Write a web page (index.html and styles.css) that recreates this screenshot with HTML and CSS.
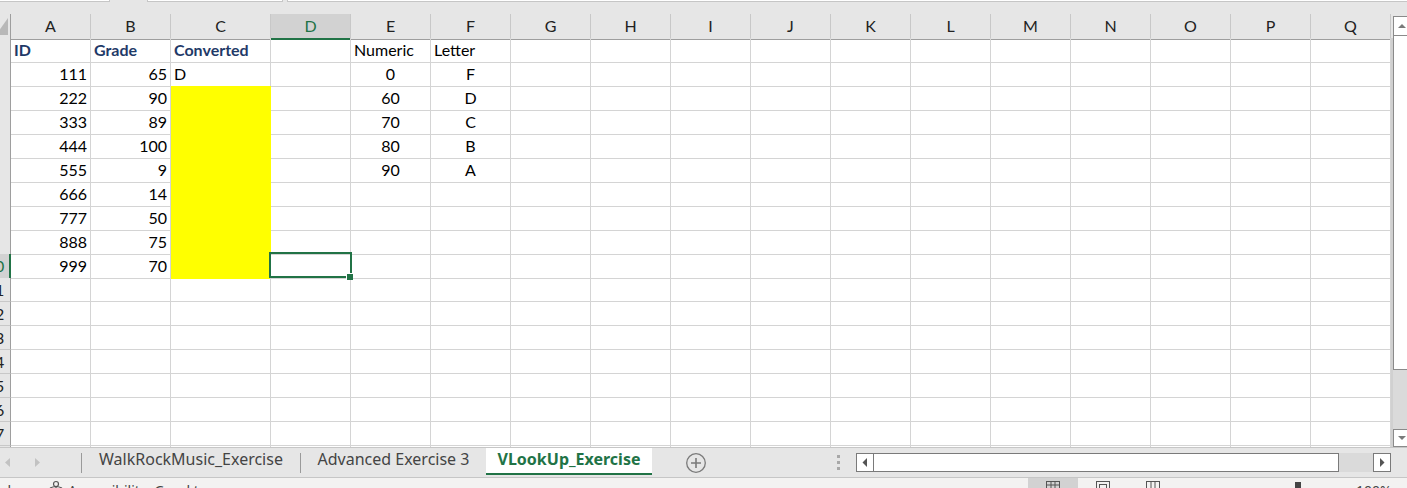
FILE: index.html
```html
<!DOCTYPE html>
<html>
<head>
<meta charset="utf-8">
<link rel="stylesheet" href="styles.css">
</head>
<body>
<div class="top">
  <div class="fb fb1"></div>
  <div class="fb fb2"></div>
  <div class="fb fb3"></div>
</div>
<div class="main">
  <div class="sheet">
    <div class="hdr">
      <div class="corner"><svg width="10" height="23" viewBox="0 0 10 23"><polygon points="8,4 8,21 -4,21" fill="#b8b8b8"/></svg></div>
      <div>A</div><div>B</div><div>C</div><div class="sel">D</div><div>E</div><div>F</div><div>G</div><div>H</div><div>I</div><div>J</div><div>K</div><div>L</div><div>M</div><div>N</div><div>O</div><div>P</div><div>Q</div>
    </div>
    <div class="row"><div class="rh"><span>1</span></div><div class="h">ID</div><div class="h">Grade</div><div class="h">Converted</div><div></div><div>Numeric</div><div>Letter</div><div></div><div></div><div></div><div></div><div></div><div></div><div></div><div></div><div></div><div></div><div></div></div>
    <div class="row"><div class="rh"><span>2</span></div><div class="r">111</div><div class="r">65</div><div>D</div><div></div><div class="m">0</div><div class="m">F</div><div></div><div></div><div></div><div></div><div></div><div></div><div></div><div></div><div></div><div></div><div></div></div>
    <div class="row"><div class="rh"><span>3</span></div><div class="r">222</div><div class="r">90</div><div class="y"></div><div></div><div class="m">60</div><div class="m">D</div><div></div><div></div><div></div><div></div><div></div><div></div><div></div><div></div><div></div><div></div><div></div></div>
    <div class="row"><div class="rh"><span>4</span></div><div class="r">333</div><div class="r">89</div><div class="y"></div><div></div><div class="m">70</div><div class="m">C</div><div></div><div></div><div></div><div></div><div></div><div></div><div></div><div></div><div></div><div></div><div></div></div>
    <div class="row"><div class="rh"><span>5</span></div><div class="r">444</div><div class="r">100</div><div class="y"></div><div></div><div class="m">80</div><div class="m">B</div><div></div><div></div><div></div><div></div><div></div><div></div><div></div><div></div><div></div><div></div><div></div></div>
    <div class="row"><div class="rh"><span>6</span></div><div class="r">555</div><div class="r">9</div><div class="y"></div><div></div><div class="m">90</div><div class="m">A</div><div></div><div></div><div></div><div></div><div></div><div></div><div></div><div></div><div></div><div></div><div></div></div>
    <div class="row"><div class="rh"><span>7</span></div><div class="r">666</div><div class="r">14</div><div class="y"></div><div></div><div></div><div></div><div></div><div></div><div></div><div></div><div></div><div></div><div></div><div></div><div></div><div></div><div></div></div>
    <div class="row"><div class="rh"><span>8</span></div><div class="r">777</div><div class="r">50</div><div class="y"></div><div></div><div></div><div></div><div></div><div></div><div></div><div></div><div></div><div></div><div></div><div></div><div></div><div></div><div></div></div>
    <div class="row"><div class="rh"><span>9</span></div><div class="r">888</div><div class="r">75</div><div class="y"></div><div></div><div></div><div></div><div></div><div></div><div></div><div></div><div></div><div></div><div></div><div></div><div></div><div></div><div></div></div>
    <div class="row"><div class="rh rsel"><span>10</span></div><div class="r">999</div><div class="r">70</div><div class="y"></div><div></div><div></div><div></div><div></div><div></div><div></div><div></div><div></div><div></div><div></div><div></div><div></div><div></div><div></div></div>
    <div class="row"><div class="rh"><span>11</span></div><div></div><div></div><div></div><div></div><div></div><div></div><div></div><div></div><div></div><div></div><div></div><div></div><div></div><div></div><div></div><div></div><div></div></div>
    <div class="row"><div class="rh"><span>12</span></div><div></div><div></div><div></div><div></div><div></div><div></div><div></div><div></div><div></div><div></div><div></div><div></div><div></div><div></div><div></div><div></div><div></div></div>
    <div class="row"><div class="rh"><span>13</span></div><div></div><div></div><div></div><div></div><div></div><div></div><div></div><div></div><div></div><div></div><div></div><div></div><div></div><div></div><div></div><div></div><div></div></div>
    <div class="row"><div class="rh"><span>14</span></div><div></div><div></div><div></div><div></div><div></div><div></div><div></div><div></div><div></div><div></div><div></div><div></div><div></div><div></div><div></div><div></div><div></div></div>
    <div class="row"><div class="rh"><span>15</span></div><div></div><div></div><div></div><div></div><div></div><div></div><div></div><div></div><div></div><div></div><div></div><div></div><div></div><div></div><div></div><div></div><div></div></div>
    <div class="row"><div class="rh"><span>16</span></div><div></div><div></div><div></div><div></div><div></div><div></div><div></div><div></div><div></div><div></div><div></div><div></div><div></div><div></div><div></div><div></div><div></div></div>
    <div class="row"><div class="rh"><span>17</span></div><div></div><div></div><div></div><div></div><div></div><div></div><div></div><div></div><div></div><div></div><div></div><div></div><div></div><div></div><div></div><div></div><div></div></div>
    <div class="row"><div class="rh"><span>18</span></div><div></div><div></div><div></div><div></div><div></div><div></div><div></div><div></div><div></div><div></div><div></div><div></div><div></div><div></div><div></div><div></div><div></div></div>
    <div class="selbox"></div>
    <div class="handle"></div>
  </div>
  <div class="vscroll">
    <div class="vbtn vup"><svg width="14" height="18" viewBox="0 0 14 18"><polygon points="4,11 12,11 8,7" fill="#7a7a7a"/></svg></div>
    <div class="vthumb"></div>
    <div class="vtrack"></div>
    <div class="vbtn vdown"><svg width="14" height="16" viewBox="0 0 14 16"><polygon points="4,6 12,6 8,10" fill="#7a7a7a"/></svg></div>
  </div>
</div>
<div class="tabbar">
  <div class="navs">
    <svg width="81" height="29" viewBox="0 0 81 29"><polygon points="10,10 10,19 5,14.5" fill="#c2c2c2"/><polygon points="35,10 35,19 40,14.5" fill="#c2c2c2"/></svg>
  </div>
  <div class="tsep"></div>
  <div class="tab t1">WalkRockMusic_Exercise</div>
  <div class="tsep"></div>
  <div class="tab t2">Advanced Exercise 3</div>
  <div class="tab active">VLookUp_Exercise</div>
  <div class="plus"><svg width="22" height="22" viewBox="0 0 22 22"><circle cx="11" cy="11" r="9.3" fill="none" stroke="#7a7a7a" stroke-width="1.3"/><path d="M11 6v10M6 11h10" stroke="#7a7a7a" stroke-width="1.6"/></svg></div>
  <div class="dots"><i></i><i></i><i></i></div>
  <div class="hscroll">
    <div class="hbtn"><svg width="17" height="17" viewBox="0 0 17 17"><polygon points="10,4 10,13 5.5,8.5" fill="#555"/></svg></div>
    <div class="hthumb"></div>
    <div class="htrack"></div>
    <div class="hbtn hright"><svg width="16" height="17" viewBox="0 0 16 17"><polygon points="6,4 6,13 10.5,8.5" fill="#555"/></svg></div>
  </div>
</div>
<div class="status">
  <div class="st st1">Ready</div>
  <div class="acc"><svg width="16" height="14" viewBox="0 0 16 14"><circle cx="8" cy="5" r="2.5" fill="none" stroke="#555" stroke-width="1.2"/><path d="M2 9 Q8 6 14 9 M8 8v6" fill="none" stroke="#555" stroke-width="1.2"/></svg></div>
  <div class="st st2">Accessibility: Good to go</div>
  <div class="views">
    <div class="vw vsel"><svg width="18" height="11" viewBox="0 0 18 11"><rect x="2.5" y="3.5" width="13" height="9" fill="none" stroke="#555"/><path d="M7 3v9M11 3v9M2 7h14" stroke="#555"/></svg></div>
    <div class="vw"><svg width="18" height="11" viewBox="0 0 18 11"><rect x="2.5" y="3.5" width="13" height="9" fill="none" stroke="#555"/><rect x="5.5" y="6.5" width="7" height="6" fill="none" stroke="#555"/></svg></div>
    <div class="vw"><svg width="18" height="11" viewBox="0 0 18 11"><rect x="2.5" y="3.5" width="13" height="9" fill="none" stroke="#555"/><path d="M7 3v9M11 3v9" stroke="#555"/></svg></div>
  </div>
  <div class="zoomer"><i class="knob"></i></div>
  <div class="st st3">100%</div>
</div>
</body>
</html>
```
FILE: styles.css
```css
* { box-sizing: border-box; }
html, body { margin: 0; padding: 0; }
body {
  width: 1407px;
  height: 488px;
  overflow: hidden;
  background: #e6e6e6;
  font-family: Lato, "Liberation Sans", sans-serif;
}

.top {
  height: 14px;
  display: flex;
  align-items: flex-start;
  background: #e6e6e6;
}
.fb {
  height: 2px;
  background: #fff;
  border-bottom: 1px solid #c6c6c6;
}
.fb1 { width: 110px; border-right: 1px solid #c6c6c6; }
.fb2 { width: 136px; margin-left: 37px; border-left: 1px solid #c6c6c6; border-right: 1px solid #c6c6c6; }
.fb3 { flex: 1; margin-left: 4px; border-left: 1px solid #c6c6c6; }

.main {
  display: flex;
  height: 433px;
  overflow: hidden;
}
.sheet {
  width: 1391px;
  position: relative;
  background: #fff;
  overflow: hidden;
}
.hdr, .row {
  display: grid;
  grid-template-columns: 11px 80px 80px 100px repeat(14, 80px);
  height: 24px;
}
.hdr > div {
  background: #e6e6e6;
  border-right: 1px solid #c8c8c8;
  border-bottom: 1px solid #9e9e9e;
  text-align: center;
  font-size: 16px;
  line-height: 24px;
  color: #222;
}
.hdr > .corner {
  border-right: 1px solid #9e9e9e;
  overflow: hidden;
}
.corner svg { display: block; }
.hdr > .sel {
  background: #d2d2d2;
  color: #217346;
  border-bottom: 2px solid #217346;
}
.row > div {
  border-right: 1px solid #d4d4d4;
  border-bottom: 1px solid #d4d4d4;
  font-size: 16px;
  line-height: 24px;
  padding: 0 3px;
  white-space: nowrap;
  color: #000;
}
.row > .rh {
  background: #e6e6e6;
  border-right: 1px solid #9e9e9e;
  border-bottom: 1px solid #c8c8c8;
  padding: 0;
  overflow: hidden;
  color: #222;
}
.rh span {
  display: block;
  width: 26px;
  margin-left: -18px;
  text-align: center;
}
.row > .rsel {
  background: #d2d2d2;
  border-right: 2px solid #217346;
  color: #217346;
}
.row > .h { font-weight: 700; color: #1f3a68; }
.row > .r { text-align: right; }
.row > .m { text-align: center; }
.row > .y {
  background: #ffff00;
  border-right-color: #ffff00;
  border-bottom-color: #ffff00;
}

.selbox {
  position: absolute;
  left: 269px;
  top: 238px;
  width: 83px;
  height: 26px;
  border: 2px solid #217346;
}
.handle {
  position: absolute;
  left: 346px;
  top: 259px;
  width: 7px;
  height: 7px;
  background: #217346;
  border-left: 1px solid #fff;
  border-top: 1px solid #fff;
}

.vscroll {
  width: 16px;
  padding-top: 2px;
  padding-left: 2px;
  display: flex;
  flex-direction: column;
  background: linear-gradient(#e6e6e6 0 24px, #d0d0d0 24px);
}
.vbtn {
  background: #fff;
  border: 1px solid #8a8a8a;
  border-right: none;
}
.vbtn svg { display: block; }
.vup { height: 20px; }
.vthumb {
  height: 334px;
  background: #fff;
  border-left: 1px solid #8a8a8a;
  border-bottom: 1px solid #8a8a8a;
}
.vtrack { height: 59px; background: #dadada; }
.vdown { height: 18px; }

.tabbar {
  height: 30px;
  border-top: 1px solid #c6c6c6;
  display: flex;
  align-items: flex-start;
  background: #e6e6e6;
  font-family: "Noto Sans", "Open Sans", sans-serif;
}
.navs { width: 81px; height: 29px; }
.navs svg { display: block; }
.tsep {
  width: 1px;
  height: 20px;
  margin-top: 5px;
  background: #9a9a9a;
}
.tab {
  height: 27px;
  text-align: center;
  font-size: 16px;
  line-height: 23px;
  color: #444;
  white-space: nowrap;
}
.t1 { width: 218px; }
.t2 { width: 185px; }
.active {
  width: 166px;
  background: #fff;
  color: #217346;
  font-weight: 700;
  border-bottom: 2px solid #217346;
}
.plus { margin-left: 33px; margin-top: 4px; }
.plus svg { display: block; }
.dots {
  margin-left: 130px;
  margin-top: 7px;
  width: 4px;
  display: flex;
  flex-direction: column;
  gap: 3px;
}
.dots i { display: block; width: 3px; height: 3px; background: #a8a8a8; }
.hscroll {
  margin-left: 15px;
  margin-top: 5px;
  width: 535px;
  height: 19px;
  display: flex;
}
.hbtn {
  width: 18px;
  height: 19px;
  background: #fff;
  border: 1px solid #7a7a7a;
}
.hbtn svg { display: block; }
.hthumb {
  width: 465px;
  height: 19px;
  background: #fff;
  border-top: 1px solid #7a7a7a;
  border-bottom: 1px solid #7a7a7a;
  border-right: 1px solid #7a7a7a;
}
.htrack { width: 34px; background: #dadada; }

.status {
  height: 11px;
  border-top: 1px solid #c6c6c6;
  background: #f3f2f1;
  display: flex;
  align-items: flex-start;
  overflow: hidden;
  font-family: "Noto Sans", "Open Sans", sans-serif;
  color: #444;
}
.st {
  font-size: 14px;
  line-height: 20px;
  margin-top: 3px;
  white-space: nowrap;
}
.st1 { margin-left: -22px; width: 62px; }
.acc { margin-left: 8px; margin-top: 1px; }
.acc svg { display: block; }
.st2 { margin-left: 4px; width: 838px; }
.views { display: flex; height: 10px; margin-left: 122px; }
.vw { width: 50px; height: 10px; display: flex; justify-content: center; }
.vw svg { display: block; margin-top: 0; }
.vsel { background: #d2d2d2; }
.zoomer {
  margin-left: 72px;
  width: 96px;
  height: 10px;
  position: relative;
  display: flex;
  justify-content: center;
}
.knob { display: block; width: 6px; height: 8px; background: #444; margin-top: 4px; }
.st3 { margin-left: 10px; }
```
